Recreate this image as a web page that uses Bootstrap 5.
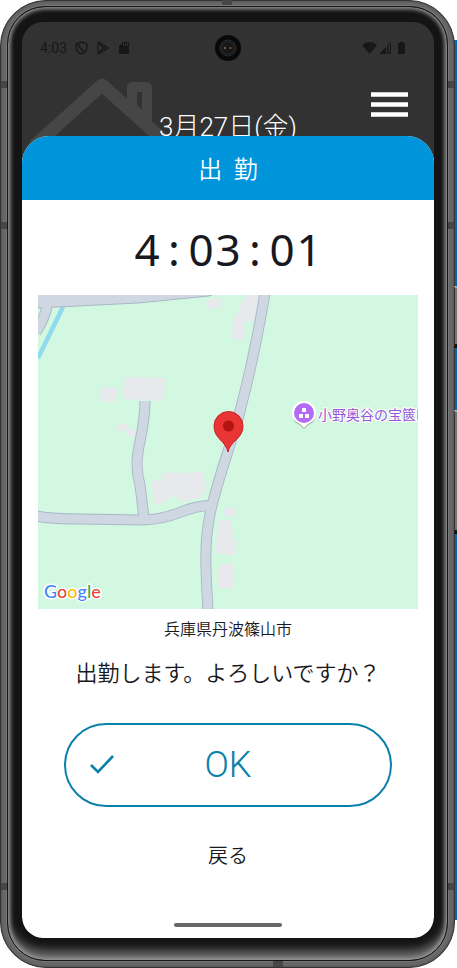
<!DOCTYPE html>
<html lang="ja">
<head>
<meta charset="utf-8">
<meta name="viewport" content="width=device-width, initial-scale=1">
<title>出勤</title>
<link href="https://cdn.jsdelivr.net/npm/bootstrap@5.3.0/dist/css/bootstrap.min.css" rel="stylesheet">
<style>
body { font-family: Roboto, "Noto Sans CJK JP", sans-serif; font-weight: 300; color: #181820; background: #fff; }
/* device body */
.backdrop { background: linear-gradient(#fff 40px, #0068b5 40px, #0068b5 920px, #fff 920px) right / 20px 100% no-repeat; padding-right: 2px; }
.shell { background: #676767; border: 1px solid #343434; border-radius: 46px; padding: 5px 6px 6px; box-shadow: inset 0 0 2px #333; }
.bevel { background: #141414; border: 1px solid #161616; border-radius: 38px; padding: 15px 13px 22px 14px;
  box-shadow: inset 0 0 4px 2px #9b9b9b, inset 0 -12px 9px -2px #666, 0 0 0 1px #777; }
.display { background: #323232; border-radius: 21px; }
.antenna { background: #464646; }
.antenna-l, .antenna-r { width: 6px; height: 7px; }
.antenna-t, .antenna-b { height: 6px; width: 10px; }
.antenna-l { left: 1px; } .antenna-r { right: 3px; }
.antenna-t { left: 222px; top: 0; height: 5px; } .antenna-b { left: 273px; bottom: 1px; }
.upper { top: 81px; } .left-mid { top: 222px; } .right-mid { top: 222px; } .lower { top: 883px; }
.side-key { right: 0; width: 3px; background: #77736f; border-left: 1px solid #333; border-top: 2px solid #aaa; border-bottom: 4px solid #111; }
.power { top: 286px; height: 62px; } .volume { top: 410px; height: 124px; }
/* app header */
.status { height: 52px; padding: 0 27px 0 18px; font-size: 14px; font-weight: 400; color: #171717; }
.lens { left: 50%; top: 13px; margin-left: -13px; }
.home { height: 62px; }
.house { left: 7px; top: 2px; }
.date-text { font-size: 26px; line-height: 30px; color: #fff; padding-top: 38px; }
.menu-btn { right: 26px; top: 18px; line-height: 0; }
/* sheet */
.sheet { border-radius: 27px 27px 21px 21px; background: #fff; }
.sheet-head { background: #0095da; color: #fff; height: 64px; font-size: 24px; font-weight: 350; white-space: pre; padding-top: 4px; }
.clock { font-family: "Noto Sans", sans-serif; font-weight: 400; font-size: 44px; line-height: 60px; padding: 19px 0 16px; }
.clock i { display: inline-block; width: 27px; text-align: center; font-style: normal; }
.map-area { margin: 0 16px; }
.address { font-size: 16px; line-height: 24px; margin: 9px 0 0; font-weight: 350; }
.ask { font-size: 22px; line-height: 32px; margin: 16px 0 0; font-weight: 350; }
.ok-btn { margin: 33px 42px 0; height: 84px; border: 2px solid #0a80ab; border-radius: 42px; color: #0a80ab; font-size: 36px; font-weight: 300; background: #fff; }
.ok-btn svg { left: 24px; top: 28px; }
.back-btn { font-size: 20px; line-height: 30px; font-weight: 350; color: #181820; margin-top: 34px; }
.home-bar { width: 108px; height: 4px; border-radius: 2px; background: #666; margin: 52px 0 11px; }
</style>
<script src="https://cdn.jsdelivr.net/npm/bootstrap@5.3.0/dist/js/bootstrap.bundle.min.js"></script>
</head>
<body>
<div class="backdrop position-relative overflow-hidden">
  <span class="side-key power position-absolute"></span>
  <span class="side-key volume position-absolute"></span>
  <div class="shell">
    <div class="bevel">
      <main class="display position-relative overflow-hidden">
        <div class="status d-flex align-items-center">
          <span>4:03</span>
          <svg class="ms-2" width="13" height="14" viewBox="0 0 13 14" fill="none" stroke="#171717" stroke-width="1.4"><path d="M6.500 1L11.700 2.800V6.600C11.700 9.700 9.300 12.200 6.500 13C3.700 12.200 1.300 9.700 1.300 6.600V2.800ZM3 2.500Q4 7 9.500 11"/></svg>
          <svg class="ms-2" width="14" height="14" viewBox="0 0 14 14" fill="none" stroke="#171717" stroke-width="1.200" stroke-linejoin="round"><path d="M2 1L12.500 7L2 13ZM2 1L9.500 9M2 13L9.500 5"/></svg>
          <svg class="ms-2" width="12" height="14" viewBox="0 0 12 14"><path d="M5 1H10Q11 1 11 2V12Q11 13 10 13H2Q1 13 1 12V5Z" fill="#171717"/><path d="M5.500 2V5M7.500 2V5M9.500 2V5" stroke="#323232"/></svg>
          <svg class="ms-auto" width="45" height="14" viewBox="0 0 45 14" fill="#171717"><path d="M0 4Q7.500 -2 15 4L7.500 13Z"/><path d="M17 13L29 1V13H25V5L24 6V13Z"/><path d="M26.500 5V12H28V3Z" fill="#323232"/><path d="M38 1H41V2H43V13H36V2H38Z"/></svg>
        </div>
        <svg class="lens position-absolute" width="26" height="26" viewBox="0 0 26 26"><circle cx="13" cy="13" r="13" fill="#080808"/><circle cx="13" cy="13" r="8" fill="#1e1e1e" stroke="#282828"/><circle cx="13" cy="13" r="5" fill="#171717"/><circle cx="10" cy="13" r="1" fill="#89733c"/><circle cx="15.500" cy="13" r="1" fill="#9b5944"/></svg>
        <header class="home position-relative">
          <svg class="house position-absolute" width="150" height="66" viewBox="0 0 150 66"><path d="M4 71L73 9L142 71" fill="none" stroke="#464646" stroke-width="13" stroke-linejoin="round"/><path d="M98 24V12Q98 6 104 6H117Q123 6 123 12V54L98 32ZM108 16V29L113 34V16Z" fill="#464646" fill-rule="evenodd"/></svg>
          <div class="date-text position-relative text-center">3月27日(金)</div>
          <button class="menu-btn position-absolute btn p-0 border-0" type="button" aria-label="メニュー"><svg width="37" height="25" viewBox="0 0 37 25"><path d="M0 2.500H37M0 12.500H37M0 22.500H37" stroke="#fff" stroke-width="4.500"/></svg></button>
        </header>
        <section class="sheet position-relative overflow-hidden d-flex flex-column">
          <h1 class="sheet-head d-flex justify-content-center align-items-center m-0">出  勤</h1>
          <div class="clock text-center"><i>4</i><i>:</i><i>0</i><i>3</i><i>:</i><i>0</i><i>1</i></div>
          <div class="map-area">
            <svg class="d-block w-100" viewBox="0 0 380 314" role="img" aria-label="地図">
              <rect width="380" height="314" fill="#d3f8e2"/>
              <path d="M25 12L0 63" stroke="#90daee" stroke-width="4.500"/>
              <g fill="#e8e9ed">
                <path d="M168 5L184 3V12L170 14ZM87 82L127 83L126 106L85 104ZM63 92L79 93L78 107L62 106ZM79 129H89V136H79ZM89 134H99V141H89Z"/>
                <path d="M208 0H224L216 27L208 26L205 34L193 31ZM196 31L208 34L205 46L192 42Z"/>
                <path d="M113 187L125 184L124 179L142 176L143 179L165 176L169 196L164 197L165 202L142 207L139 201L129 203V207L117 210Z"/>
                <path d="M186 213H198V221H186ZM181 225H194V235L196 236V247H199L197 261L177 258ZM182 269H196V293H180V274H182Z"/>
              </g>
              <g fill="none" stroke="#a9b6c7" stroke-width="11">
                <path d="M107 106C107 145 93 158 102 190L106 223"/>
                <path d="M-2 221Q15 224 43 224L104 225Q123 225 143 217T178 211"/>
                <path d="M227 -2C218 52 211 82 202 116S174 201 171 225C166 251 168 280 170 316"/>
                <path d="M10 6Q8 22 -2 37"/>
              </g>
              <path d="M-1 -1H177L171 1L100 8L0 13Z" fill="#cfd8e2" stroke="#a9b6c7"/>
              <g fill="none" stroke="#cfd8e2" stroke-width="9.200">
                <path d="M107 106C107 145 93 158 102 190L106 223"/>
                <path d="M-2 221Q15 224 43 224L104 225Q123 225 143 217T178 211"/>
                <path d="M227 -2C218 52 211 82 202 116S174 201 171 225C166 251 168 280 170 316"/>
                <path d="M10 6Q8 22 -2 37"/>
              </g>
              <path d="M190 157C188 146 176 144 176 131A14.500 14.500 0 0 1 205 131C205 144 192 146 190 157Z" fill="#ea3535" stroke="#c72222"/>
              <circle cx="190.500" cy="131" r="5.500" fill="#b31412"/>
              <path d="M266 108A12 12 0 0 1 275 127Q269 130 266 134Q263 130 257 127A12 12 0 0 1 266 108Z" fill="#8ca699"/>
              <path d="M266 106A12 12 0 0 1 275 126Q269 129 266 133Q263 129 257 126A12 12 0 0 1 266 106Z" fill="#fff"/>
              <circle cx="266" cy="118" r="10" fill="#b36bf5"/>
              <path d="M264 113H268V117H264ZM261 119H265V123H261ZM267 119H271V123H267Z" fill="#fff"/>
              <text x="280" y="125" font-size="14" font-weight="400" fill="#9657d6" stroke="#fff" stroke-width="2" paint-order="stroke" font-family="Noto Sans CJK JP, sans-serif">小野奥谷の宝篋印塔</text>
              <text x="6" y="303" font-size="18" font-weight="500" font-family="Lato, sans-serif" stroke="#fff" stroke-width="3" stroke-linejoin="round" paint-order="stroke"><tspan fill="#4285f4">G</tspan><tspan fill="#ea4335">o</tspan><tspan fill="#fbbc04">o</tspan><tspan fill="#4285f4">g</tspan><tspan fill="#34a853">l</tspan><tspan fill="#ea4335">e</tspan></text>
            </svg>
          </div>
          <p class="address text-center">兵庫県丹波篠山市</p>
          <p class="ask text-center">出勤します。よろしいですか？</p>
          <button class="ok-btn btn position-relative p-0" type="button"><svg class="position-absolute" width="24" height="24" viewBox="0 0 24 24" fill="none" stroke="#0a80ab" stroke-width="2.600"><path d="M1 12L8 19L23 3"/></svg>OK</button>
          <button class="back-btn btn p-0 border-0 align-self-center" type="button">戻る</button>
          <div class="home-bar align-self-center"></div>
        </section>
      </main>
    </div>
  </div>
  <span class="antenna antenna-l upper position-absolute"></span>
  <span class="antenna antenna-r upper position-absolute"></span>
  <span class="antenna antenna-l left-mid position-absolute"></span>
  <span class="antenna antenna-r right-mid position-absolute"></span>
  <span class="antenna antenna-l lower position-absolute"></span>
  <span class="antenna antenna-r lower position-absolute"></span>
  <span class="antenna antenna-t position-absolute"></span>
  <span class="antenna antenna-b position-absolute"></span>
</div>
</body>
</html>
